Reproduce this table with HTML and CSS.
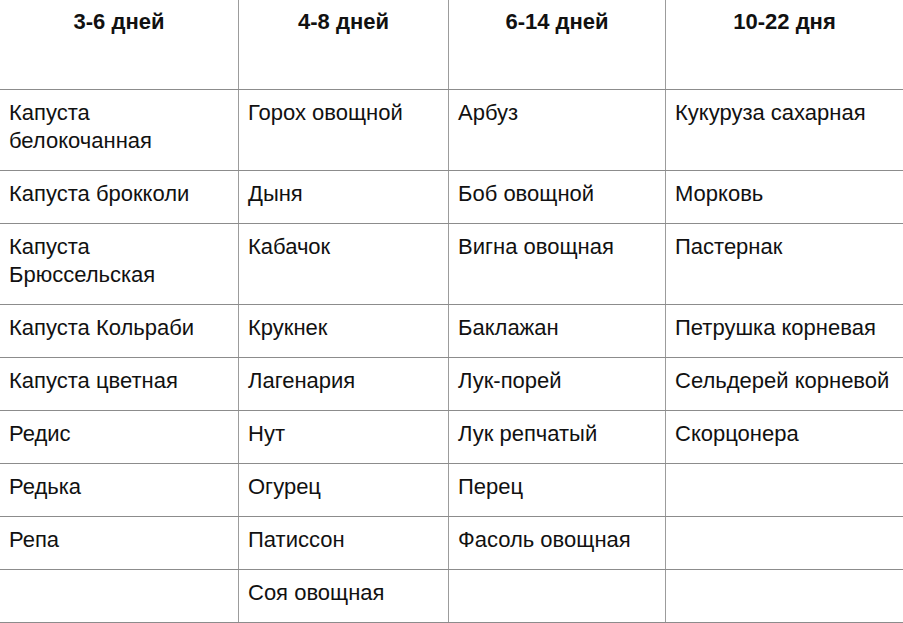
FILE: index.html
```html
<!DOCTYPE html>
<html lang="ru">
<head>
<meta charset="utf-8">
<title>Сроки прорастания семян</title>
<link rel="stylesheet" href="styles.css">
</head>
<body>
<table class="seeds">
  <colgroup>
    <col class="c1"><col class="c2"><col class="c3"><col class="c4">
  </colgroup>
  <thead>
    <tr><th>3-6 дней</th><th>4-8 дней</th><th>6-14 дней</th><th>10-22 дня</th></tr>
  </thead>
  <tbody>
    <tr><td>Капуста белокочанная</td><td>Горох овощной</td><td>Арбуз</td><td>Кукуруза сахарная</td></tr>
    <tr><td>Капуста брокколи</td><td>Дыня</td><td>Боб овощной</td><td>Морковь</td></tr>
    <tr><td>Капуста Брюссельская</td><td>Кабачок</td><td>Вигна овощная</td><td>Пастернак</td></tr>
    <tr><td>Капуста Кольраби</td><td>Крукнек</td><td>Баклажан</td><td>Петрушка корневая</td></tr>
    <tr><td>Капуста цветная</td><td>Лагенария</td><td>Лук-порей</td><td>Сельдерей корневой</td></tr>
    <tr><td>Редис</td><td>Нут</td><td>Лук репчатый</td><td>Скорцонера</td></tr>
    <tr><td>Редька</td><td>Огурец</td><td>Перец</td><td></td></tr>
    <tr><td>Репа</td><td>Патиссон</td><td>Фасоль овощная</td><td></td></tr>
    <tr><td></td><td>Соя овощная</td><td></td><td></td></tr>
  </tbody>
</table>
</body>
</html>
```
FILE: styles.css
```css
html, body {
  margin: 0;
  padding: 0;
  background: #fff;
}
body {
  font-family: "Liberation Sans", Arial, sans-serif;
  color: #111;
  overflow: hidden;
}
.seeds {
  border-collapse: collapse;
  table-layout: fixed;
  width: 904px;
  margin: -2px 0 0 -1px;
  font-size: 22px;
  line-height: 28px;
}
.seeds .c1 { width: 239px; }
.seeds .c2 { width: 210px; }
.seeds .c3 { width: 217px; }
.seeds .c4 { width: 238px; }
.seeds th,
.seeds td {
  border-style: solid;
  border-width: 1px;
  border-color: #8c8c8c #9c9c9c;
  text-align: left;
  vertical-align: top;
  padding: 9px 9px 15px 9px;
}
.seeds th {
  text-align: center;
  font-weight: bold;
  padding: 9px 9px 53px 9px;
}
```
